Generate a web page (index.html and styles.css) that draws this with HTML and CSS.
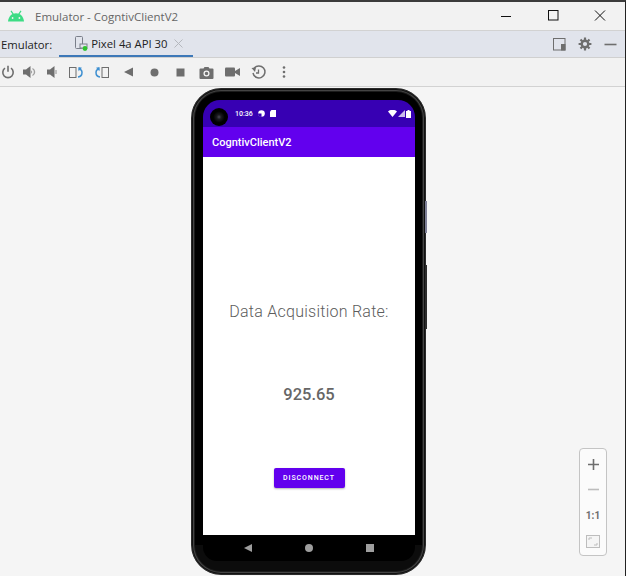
FILE: index.html
```html
<!DOCTYPE html>
<html lang="en">

<head>
  <meta charset="UTF-8">
  <title>Emulator - CogntivClientV2</title>
  <link rel="stylesheet" href="styles.css">
</head>

<body>

  <div id="window">

    <div id="title-bar">
      <svg class="android-logo" width="18" height="12" viewBox="0 0 18 12">
        <path d="M1 11.500C1.400 6.500 4.600 3.200 9 3.200s7.600 3.300 8 8.300z" fill="#3ddc84" />
        <path d="M4 .8l2.200 3.400M14 .8l-2.200 3.400" stroke="#3ddc84" stroke-width="1.200" />
        <circle cx="5.600" cy="8" r=".9" fill="#f2f2f2" />
        <circle cx="12.400" cy="8" r=".9" fill="#f2f2f2" />
      </svg>
      <span class="window-title">Emulator - CogntivClientV2</span>
      <div class="window-buttons">
        <svg width="12" height="12" viewBox="0 0 12 12">
          <path d="M1 6.500h10" stroke="#111" stroke-width="1" />
        </svg>
        <svg width="12" height="12" viewBox="0 0 12 12">
          <rect x="1.500" y=".5" width="9.500" height="9.500" fill="none" stroke="#111" stroke-width="1" />
        </svg>
        <svg width="12" height="12" viewBox="0 0 12 12">
          <path d="M1 .5l10 10M11 .5l-10 10" stroke="#111" stroke-width="1" />
        </svg>
      </div>
    </div>

    <div id="tab-bar">
      <span class="tab-label">Emulator:</span>
      <div class="tab">
        <svg width="13" height="15" viewBox="0 0 13 15">
          <rect x=".5" y=".5" width="7" height="12" rx="1" fill="none" stroke="#7a7f8a" />
          <rect x="5" y="8" width="7" height="4" fill="#e1e4ec" stroke="#7a7f8a" />
          <circle cx="10" cy="12.500" r="2.400" fill="#2fc22f" />
        </svg>
        <span>Pixel 4a API 30</span>
        <svg class="tab-close" width="9" height="9" viewBox="0 0 9 9">
          <path d="M.5.5l8 8M8.500.5l-8 8" stroke="#b4b7bd" stroke-width="1" />
        </svg>
      </div>
      <div class="tab-tools">
        <svg width="13" height="13" viewBox="0 0 13 13">
          <rect x=".5" y=".5" width="11.500" height="11.500" fill="none" stroke="#6e6e6e" />
          <rect x="8" y="6" width="4.500" height="6.500" fill="#6e6e6e" />
        </svg>
        <svg width="14" height="14" viewBox="0 0 14 14">
          <circle cx="7" cy="7" r="3.300" fill="none" stroke="#6e6e6e" stroke-width="2.400" />
          <path d="M7 .6v2.400M7 11v2.400M.6 7H3M11 7h2.400M2.500 2.500l1.700 1.700M9.800 9.800l1.700 1.700M11.500 2.500L9.800 4.200M4.200 9.800l-1.700 1.700" stroke="#6e6e6e" stroke-width="2.200" />
        </svg>
        <svg width="13" height="13" viewBox="0 0 13 13">
          <path d="M.5 6.500h12" stroke="#6e6e6e" stroke-width="1.600" />
        </svg>
      </div>
    </div>

    <div id="toolbar">
      <div class="tools-narrow">
        <svg width="14" height="14" viewBox="0 0 14 14">
          <path d="M4 3.200a5.200 5.200 0 1 0 6 0M7 .8v6" fill="none" stroke="#6e6e6e" stroke-width="1.600" />
        </svg>
        <svg width="14" height="12" viewBox="0 0 14 12">
          <path d="M0 3.500h3L7.500 0v12L3 8.500H0z" fill="#6e6e6e" />
          <path d="M9.500 2.500a4 4 0 0 1 0 7" fill="none" stroke="#a0a0a0" stroke-width="1.400" />
          <path d="M8 4.500a2 2 0 0 1 0 3" fill="none" stroke="#a0a0a0" />
        </svg>
        <svg width="14" height="12" viewBox="0 0 14 12">
          <path d="M2 3.500h3L9.500 0v12L5 8.500H2z" fill="#6e6e6e" />
          <path d="M11 4v4" stroke="#a0a0a0" stroke-width="1.200" />
        </svg>
      </div>
      <div class="tools-wide">
        <svg width="14" height="11" viewBox="0 0 14 11">
          <rect x=".5" y=".5" width="6.500" height="10" fill="none" stroke="#6e6e6e" />
          <path d="M9 10c3.200-.4 4-2.500 4-4.500S12.300 2.300 9.500 2" fill="none" stroke="#3d8fd1" stroke-width="1.500" />
          <path d="M9.500 0v4.200L13 .8z" fill="#3d8fd1" />
        </svg>
        <svg width="14" height="11" viewBox="0 0 14 11">
          <path d="M5 10C1.800 9.600 1 7.500 1 5.500S1.700 2.300 4.500 2" fill="none" stroke="#3d8fd1" stroke-width="1.500" />
          <path d="M4.500 0v4.200L1 .8z" fill="#3d8fd1" />
          <rect x="7" y=".5" width="6.500" height="10" fill="none" stroke="#6e6e6e" />
        </svg>
        <svg width="9" height="10" viewBox="0 0 9 10">
          <path d="M9 .5v9L0 5z" fill="#6e6e6e" />
        </svg>
        <svg width="9" height="9" viewBox="0 0 9 9">
          <circle cx="4.500" cy="4.500" r="4" fill="#6e6e6e" />
        </svg>
        <svg width="9" height="9" viewBox="0 0 9 9">
          <rect x=".5" y=".5" width="8" height="8" fill="#6e6e6e" />
        </svg>
        <svg width="15" height="13" viewBox="0 0 15 13">
          <path d="M1.500 2.500h3L5.500 1h4l1 1.500h3a1 1 0 0 1 1 1V12a1 1 0 0 1-1 1h-12a1 1 0 0 1-1-1V3.500a1 1 0 0 1 1-1z" fill="#6e6e6e" />
          <circle cx="7.500" cy="7.500" r="2.400" fill="none" stroke="#f2f2f2" stroke-width="1.300" />
        </svg>
        <svg width="15" height="10" viewBox="0 0 15 10">
          <rect x="0" y=".5" width="10" height="9" rx="1" fill="#6e6e6e" />
          <path d="M10 4L15 1v8L10 6z" fill="#6e6e6e" />
        </svg>
        <svg width="15" height="15" viewBox="0 0 15 15">
          <path d="M3 3.500A6 6 0 1 1 2 8" fill="none" stroke="#6e6e6e" stroke-width="1.500" />
          <path d="M.5 3l4.500-.5L4 7z" fill="#6e6e6e" />
          <path d="M7.500 4.500v3.500H5" fill="none" stroke="#6e6e6e" stroke-width="1.300" />
        </svg>
        <svg width="4" height="12" viewBox="0 0 4 12">
          <circle cx="2" cy="1.500" r="1.300" fill="#6e6e6e" />
          <circle cx="2" cy="6" r="1.300" fill="#6e6e6e" />
          <circle cx="2" cy="10.500" r="1.300" fill="#6e6e6e" />
        </svg>
      </div>
    </div>

    <div id="stage">

      <div id="phone">
        <div class="side-button volume"></div>
        <div class="side-button power"></div>
        <div id="screen">
          <div id="status-bar">
            <div class="camera"></div>
            <span class="clock">10:36</span>
            <svg class="status-icon" width="7" height="7" viewBox="0 0 7 7">
              <circle cx="3.500" cy="3.500" r="3.300" fill="#fff" />
              <path d="M3.500 3.500V7A3.500 3.500 0 0 1 0 3.500z" fill="#3700b3" />
            </svg>
            <svg class="status-icon" width="6" height="7" viewBox="0 0 6 7">
              <path d="M1.500 0H6v7H0V1.500z" fill="#fff" />
            </svg>
            <div class="status-right">
              <svg width="9" height="7" viewBox="0 0 9 7">
                <path d="M0 1.400a7 7 0 0 1 9 0L4.500 7z" fill="#fff" />
              </svg>
              <svg width="7" height="7" viewBox="0 0 7 7">
                <path d="M7 0v7H0z" fill="#fff" opacity=".75" />
              </svg>
              <svg width="5" height="8" viewBox="0 0 5 8">
                <path d="M1.500 0h2v1H5v7H0V1h1.500z" fill="#fff" />
              </svg>
            </div>
          </div>
          <div id="app-bar">CogntivClientV2</div>
          <div id="app-content">
            <div class="rate-label">Data Acquisition Rate:</div>
            <div class="rate-value">925.65</div>
            <button class="disconnect-button">DISCONNECT</button>
          </div>
          <div id="nav-bar">
            <svg width="8" height="8" viewBox="0 0 8 8">
              <path d="M8 0v8L0 4z" fill="#9e9e9e" />
            </svg>
            <svg width="8" height="8" viewBox="0 0 8 8">
              <circle cx="4" cy="4" r="4" fill="#9e9e9e" />
            </svg>
            <svg width="8" height="8" viewBox="0 0 8 8">
              <rect width="8" height="8" fill="#9e9e9e" />
            </svg>
          </div>
        </div>
      </div>

      <div id="zoom-panel">
        <svg width="11" height="11" viewBox="0 0 11 11">
          <path d="M5.500 0v11M0 5.500h11" stroke="#6e6e6e" stroke-width="1.600" />
        </svg>
        <svg width="11" height="11" viewBox="0 0 11 11">
          <path d="M0 5.500h11" stroke="#bdbdbd" stroke-width="1.600" />
        </svg>
        <span class="zoom-ratio">1:1</span>
        <svg width="14" height="13" viewBox="0 0 14 13">
          <rect x=".5" y=".5" width="13" height="12" fill="#f5f5f5" stroke="#bdbdbd" />
          <path d="M3 5V3h3M11 8v2H8" fill="none" stroke="#bdbdbd" />
        </svg>
      </div>

    </div>

  </div>

</body>

</html>
```

FILE: styles.css
```css
* {
  margin: 0;
  padding: 0;
  box-sizing: border-box;
  font-family: 'Roboto', sans-serif;
}

html,
body {
  height: 100%;
  overflow: hidden;
}

#window {
  display: flex;
  flex-direction: column;
  width: 626px;
  height: 576px;
  background-color: #f5f5f5;
  border-top: 2px solid #3c3c3c;
  border-right: 1px solid #222;
}

#title-bar {
  height: 29px;
  display: flex;
  align-items: center;
  padding-left: 7px;
  background-color: #f2f2f2;
  border-bottom: 1px solid #d2d2d2;
}

.window-title {
  margin-left: 10px;
  font-family: 'Open Sans', sans-serif;
  font-size: 11.5px;
  color: #666;
}

.window-buttons {
  margin-left: auto;
  margin-right: 19px;
  display: flex;
  gap: 35px;
}

#tab-bar {
  height: 27px;
  display: flex;
  align-items: center;
  background-color: #e1e4ec;
  border-bottom: 1px solid #d0d0d0;
  padding-left: 1px;
  font-size: 11.3px;
  color: #222;
}

.tab-label {
  font-family: 'Open Sans', sans-serif;
}

.tab {
  height: 26px;
  width: 134px;
  margin-left: 7px;
  display: flex;
  align-items: center;
  gap: 3px;
  padding-left: 16px;
  border-bottom: 2px solid #3d78b8;
}

.tab span {
  font-family: 'Open Sans', sans-serif;
}

.tab-close {
  margin-left: 3px;
}

.tab-tools {
  margin-left: auto;
  margin-right: 8px;
  display: flex;
  align-items: center;
  gap: 12px;
}

#toolbar {
  height: 29px;
  display: flex;
  align-items: center;
  padding-left: 1px;
  background-color: #f2f2f2;
  border-bottom: 1px solid #d2d2d2;
}

.tools-narrow {
  display: flex;
  align-items: center;
  gap: 8px;
}

.tools-wide {
  margin-left: 4px;
  display: grid;
  grid-template-columns: repeat(9, 26px);
  align-items: center;
  justify-items: center;
}

#stage {
  position: relative;
  flex: 1;
  overflow: hidden;
  display: flex;
  justify-content: center;
  padding: 1px 8px 0 0;
}

#phone {
  position: relative;
  flex: none;
  width: 235px;
  height: 487px;
  padding: 11px 10px 0 11px;
  background: linear-gradient(#000 94%, #0c0c0c 94%);
  border: 1px solid #2a2a2a;
  border-radius: 30px;
  box-shadow: inset 0 0 0 1px #111, inset 0 0 0 2px #444, inset 0 0 0 3px #1c1c1c;
}

.side-button {
  position: absolute;
  right: -2px;
  width: 2px;
}

.volume {
  top: 112px;
  height: 32px;
  background-color: #7d7f96;
}

.power {
  top: 176px;
  height: 64px;
  background-color: #2c2c2c;
}

#screen {
  display: flex;
  flex-direction: column;
  height: 461px;
  border-radius: 17px 17px 14px 14px;
  overflow: hidden;
}

#status-bar {
  height: 27px;
  flex: none;
  display: flex;
  align-items: center;
  gap: 5px;
  padding: 0 4px 0 7px;
  background-color: #3700b3;
}

.camera {
  width: 18px;
  height: 18px;
  margin-top: 6px;
  margin-right: 2px;
  border-radius: 50%;
  background: radial-gradient(circle, #4a4a55 0, #1a1a1f 18%, #000 45%);
}

.clock {
  font-size: 7px;
  font-weight: 500;
  color: #fff;
}

.status-right {
  margin-left: auto;
  display: flex;
  align-items: center;
  gap: 1px;
}

#app-bar {
  height: 30px;
  flex: none;
  display: flex;
  align-items: center;
  padding-left: 9px;
  background-color: #6200ee;
  color: #fff;
  font-size: 11px;
  font-weight: 500;
}

#app-content {
  height: 378px;
  flex: none;
  display: flex;
  flex-direction: column;
  align-items: center;
  background-color: #fff;
}

.rate-label {
  margin-top: 145px;
  font-size: 16px;
  font-weight: 300;
  line-height: 20px;
  color: #5c5c5c;
  letter-spacing: .25px;
}

.rate-value {
  margin-top: 63px;
  font-size: 16.5px;
  font-weight: 500;
  line-height: 20px;
  color: #666;
}

.disconnect-button {
  margin-top: 63px;
  width: 71px;
  height: 20px;
  border: none;
  border-radius: 2px;
  background-color: #6200ee;
  color: #fff;
  font-size: 7px;
  font-weight: 500;
  letter-spacing: .9px;
  box-shadow: 0 1px 2px rgba(0, 0, 0, .3);
}

#nav-bar {
  flex: 1;
  display: flex;
  align-items: flex-start;
  justify-content: center;
  gap: 53px;
  padding-top: 9px;
  background-color: #000;
}

#zoom-panel {
  position: absolute;
  top: 361px;
  left: 579px;
  width: 28px;
  height: 108px;
  display: flex;
  flex-direction: column;
  align-items: center;
  justify-content: space-between;
  padding: 10px 0 7px;
  background-color: #fbfbfb;
  border: 1px solid #c4c4c4;
  border-radius: 4px;
}

.zoom-ratio {
  font-size: 10px;
  font-weight: 700;
  color: #6e6e6e;
}
```
